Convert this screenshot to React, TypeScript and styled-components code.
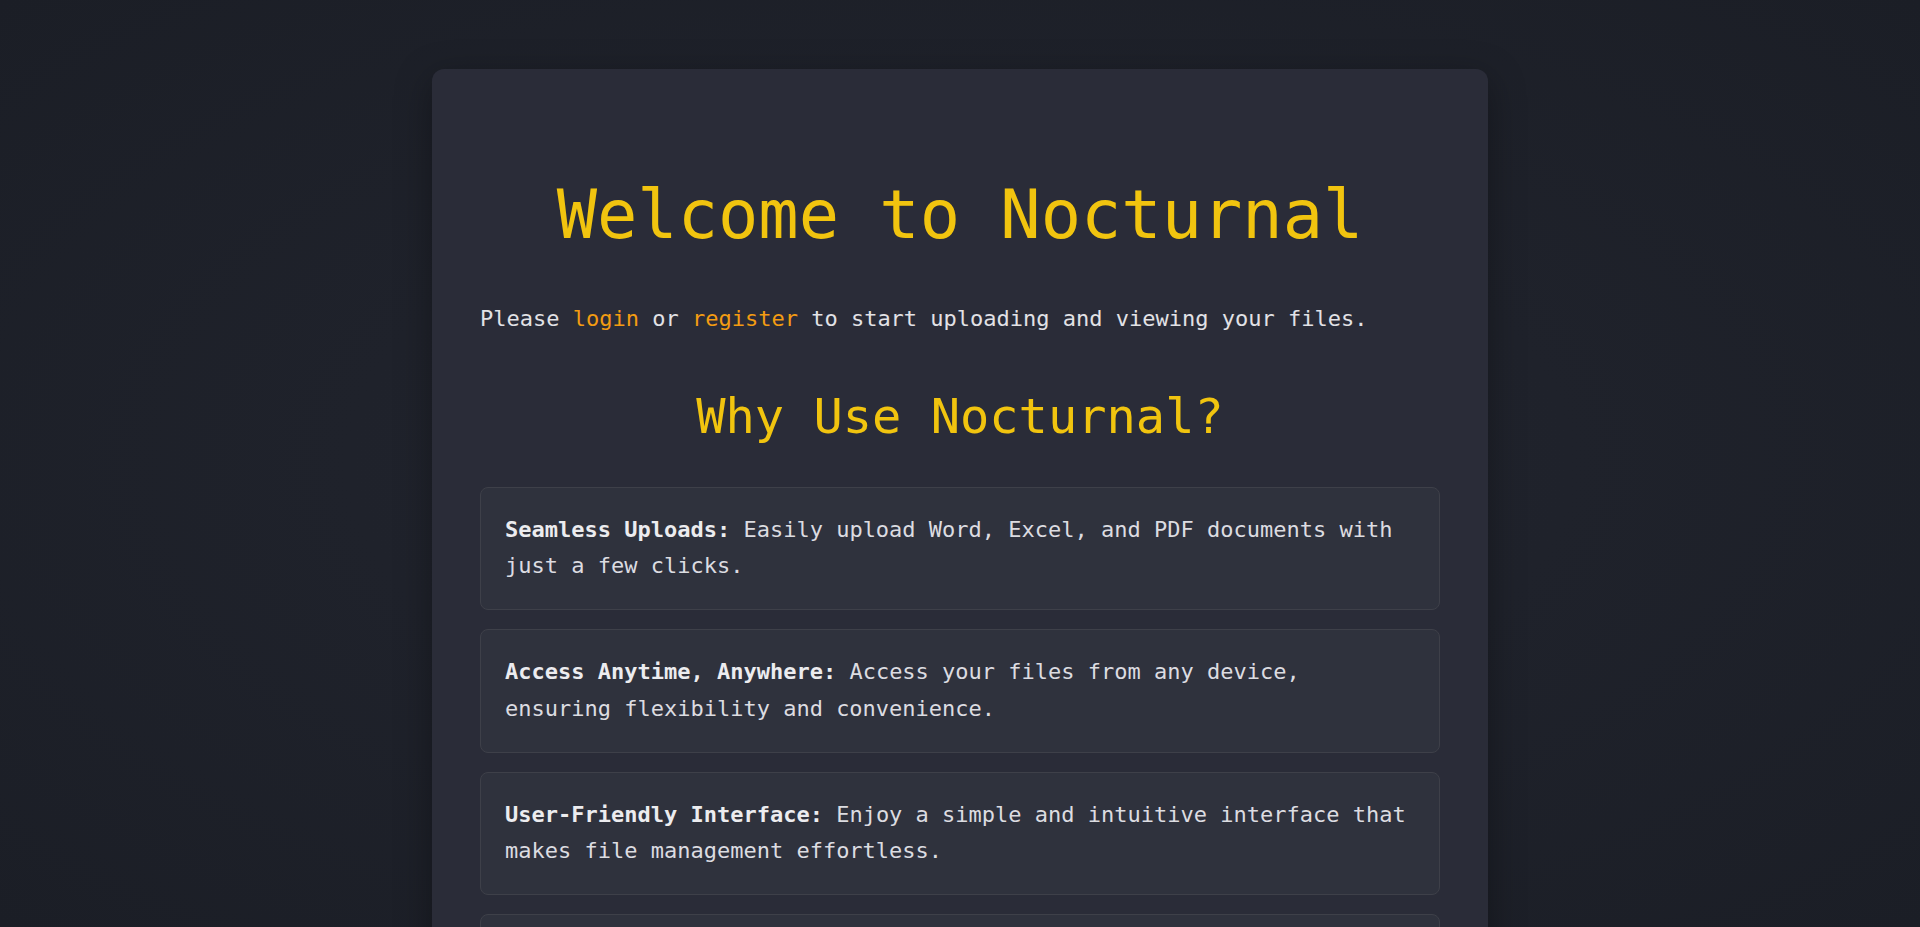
import React from "react";
import styled, { createGlobalStyle } from "styled-components";

const GlobalStyle = createGlobalStyle`
  html, body {
    margin: 0;
    padding: 0;
  }
  body {
    min-height: 100vh;
    background: radial-gradient(ellipse at center, #22252f 0%, #1f222b 45%, #1b1e26 100%);
    background-attachment: fixed;
    font-family: "DejaVu Sans Mono", "Liberation Mono", monospace;
    color: #e3e3e6;
  }
`;

const Page = styled.main`
  display: flex;
  justify-content: center;
  padding: 69px 0 60px;
`;

const Card = styled.section`
  width: 1056px;
  box-sizing: border-box;
  padding: 48px 48px 48px;
  background: #2a2c38;
  border-radius: 12px;
  box-shadow: 0 10px 36px rgba(0, 0, 0, 0.35);
`;

const Title = styled.h1`
  margin: 58px 0 46px;
  text-align: center;
  font-size: 67px;
  line-height: 1.2;
  font-weight: 400;
  color: #f1c40f;
`;

const Intro = styled.p`
  margin: 0 0 50px;
  font-size: 22px;
  line-height: 1.67;
  color: #e2e2e6;
`;

const Link = styled.a`
  color: #f39c12;
  text-decoration: none;
`;

const SubTitle = styled.h2`
  margin: 0 0 41px;
  text-align: center;
  font-size: 48.7px;
  line-height: 1.18;
  font-weight: 400;
  color: #f1c40f;
`;

const FeatureList = styled.ul`
  list-style: none;
  margin: 0;
  padding: 0;
  display: flex;
  flex-direction: column;
  gap: 19px;
`;

const Feature = styled.li`
  padding: 24px;
  background: #2f323d;
  border: 1px solid #3e4049;
  border-radius: 8px;
  font-size: 22px;
  line-height: 1.67;
  color: #dcdce1;
`;

const Label = styled.strong`
  font-weight: 700;
  color: #ececef;
`;

const features = [
  {
    label: "Seamless Uploads:",
    text: "Easily upload Word, Excel, and PDF documents with just a few clicks.",
  },
  {
    label: "Access Anytime, Anywhere:",
    text: "Access your files from any device, ensuring flexibility and convenience.",
  },
  {
    label: "User-Friendly Interface:",
    text: "Enjoy a simple and intuitive interface that makes file management effortless.",
  },
  {
    label: "Secure Storage:",
    text: "Your files are stored safely and protected so only you can access them.",
  },
];

export default function App() {
  return (
    <>
      <GlobalStyle />
      <Page>
        <Card>
          <Title>Welcome to Nocturnal</Title>
          <Intro>
            Please <Link href="#">login</Link> or <Link href="#">register</Link> to start
            uploading and viewing your files.
          </Intro>
          <SubTitle>Why Use Nocturnal?</SubTitle>
          <FeatureList>
            {features.map((f) => (
              <Feature key={f.label}>
                <Label>{f.label}</Label> {f.text}
              </Feature>
            ))}
          </FeatureList>
        </Card>
      </Page>
    </>
  );
}
